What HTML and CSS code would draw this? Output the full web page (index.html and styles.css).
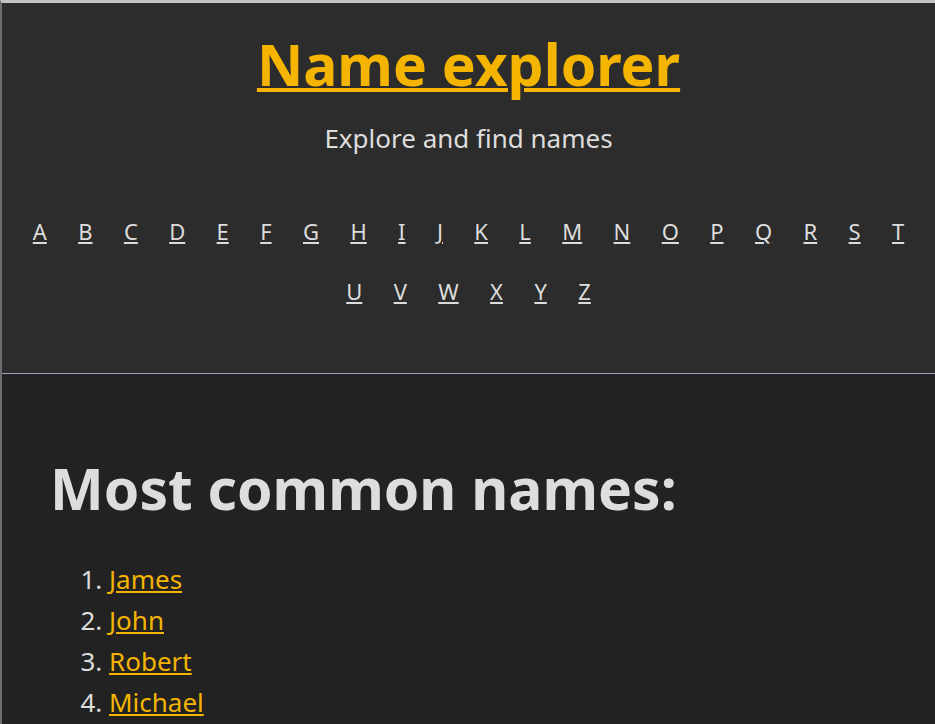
FILE: index.html
```html
<!DOCTYPE html>
<html lang="en">
<head>
<meta charset="utf-8">
<title>Name explorer</title>
<link rel="stylesheet" href="styles.css">
</head>
<body>
<header class="site-header">
  <h1 class="site-title"><a href="#">Name explorer</a></h1>
  <p class="tagline">Explore and find names</p>
  <nav class="letters">
    <a href="#">A</a><a href="#">B</a><a href="#">C</a><a href="#">D</a><a href="#">E</a><a href="#">F</a><a href="#">G</a><a href="#">H</a><a href="#">I</a><a href="#">J</a><a href="#">K</a><a href="#">L</a><a href="#">M</a><a href="#">N</a><a href="#">O</a><a href="#">P</a><a href="#">Q</a><a href="#">R</a><a href="#">S</a><a href="#">T</a><a href="#">U</a><a href="#">V</a><a href="#">W</a><a href="#">X</a><a href="#">Y</a><a href="#">Z</a>
  </nav>
</header>
<main class="content">
  <h2 class="section-title">Most common names:</h2>
  <ol class="name-list">
    <li><a href="#">James</a></li>
    <li><a href="#">John</a></li>
    <li><a href="#">Robert</a></li>
    <li><a href="#">Michael</a></li>
  </ol>
</main>
</body>
</html>
```
FILE: styles.css
```css
html, body {
  margin: 0;
  padding: 0;
}
body {
  background: #222222;
  color: #dddddd;
  font-family: "Noto Sans", "Open Sans", sans-serif;
  border-top: 3px solid #c4c4c4;
  border-left: 2px solid #6e6e6e;
  min-height: 100vh;
  box-sizing: border-box;
}
.site-header {
  background: #2c2c2c;
  text-align: center;
  border-bottom: 1px solid #a0a0c0;
  padding: 21px 0 52px;
}
.site-title {
  margin: 0;
  font-size: 57px;
  line-height: 80px;
  font-weight: 700;
}
.site-title a {
  color: #f4b400;
  text-decoration-thickness: 4px;
}
.tagline {
  margin: 17px 0 46px;
  font-size: 26px;
  line-height: 34px;
}
.letters {
  display: flex;
  flex-wrap: wrap;
  justify-content: center;
  line-height: 60px;
  font-size: 22px;
}
.letters a {
  color: #dddddd;
  margin: 0 15.7px;
}
.content {
  padding: 74px 48px 0;
}
.section-title {
  margin: 0 0 31px;
  font-size: 57px;
  line-height: 80px;
  font-weight: 700;
}
.name-list {
  margin: 0;
  padding-left: 59px;
  font-size: 26px;
  line-height: 41px;
}
.name-list a {
  color: #f4b400;
}
```
